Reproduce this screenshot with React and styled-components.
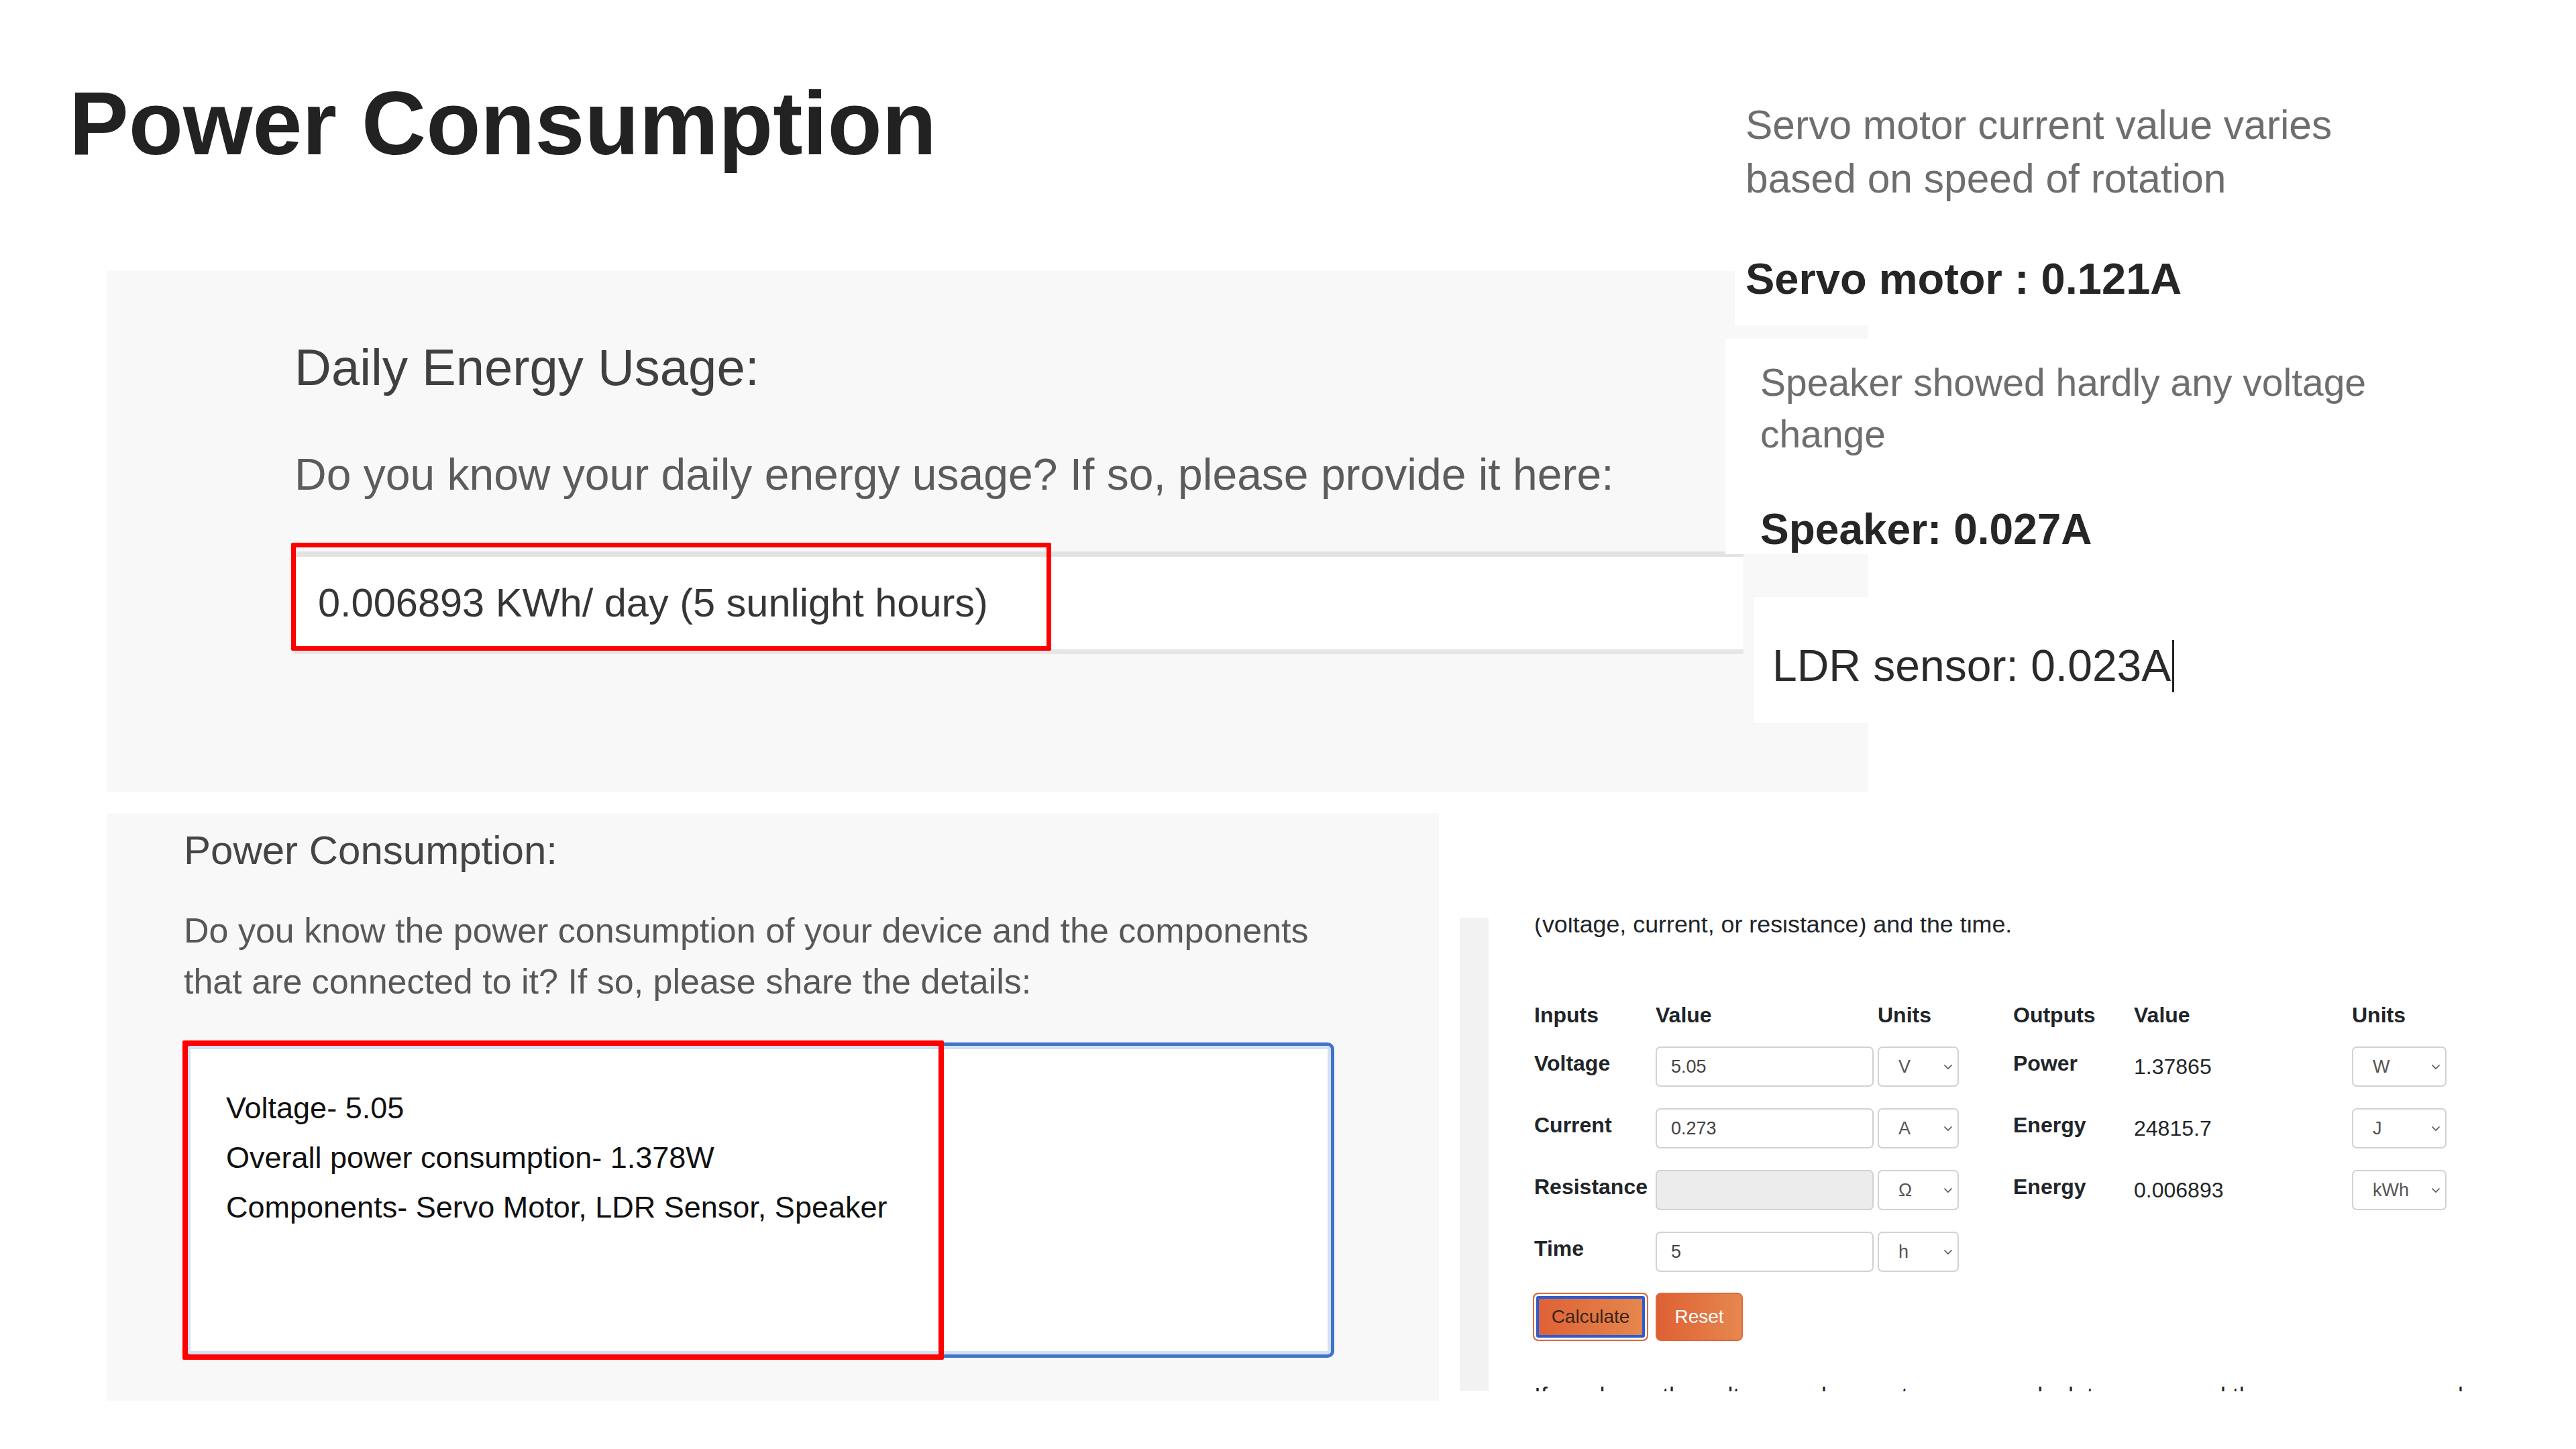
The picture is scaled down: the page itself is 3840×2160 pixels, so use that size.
import React from "react"
import styled, { createGlobalStyle } from "styled-components"

const GlobalStyle = createGlobalStyle`
  html, body {
    margin: 0;
    padding: 0;
    background: #fff;
  }
  body {
    font-family: "Liberation Sans", Arial, sans-serif;
  }
  * {
    box-sizing: border-box;
  }
`

const Page = styled.div`
  width: 3840px;
  height: 2160px;
  overflow: hidden;
  background: #fff;
`

const TopArea = styled.div`
  display: grid;
  grid-template-columns: 2572px 1fr;
  grid-template-rows: 404px 777px;
`

const Title = styled.h1`
  grid-column: 1;
  grid-row: 1;
  margin: 118px 0 0 103px;
  font-size: 133px;
  line-height: 1;
  font-weight: 700;
  color: #222;
`

const DailyPanel = styled.section`
  grid-column: 1 / 3;
  grid-row: 2;
  margin-left: 159px;
  width: 2626px;
  background: #f8f8f8;
  padding: 99px 0 0 280px;
`

const DailyHeading = styled.h2`
  margin: 0;
  font-size: 76px;
  line-height: 90px;
  font-weight: 400;
  color: #404040;
`

const DailyQuestion = styled.p`
  margin: 75px 0 0;
  font-size: 66px;
  line-height: 79px;
  color: #5c5c5c;
  white-space: nowrap;
`

const Field = styled.div`
  position: relative;
  margin-top: 75px;
  width: 2160px;
  height: 153px;
  background: #fff;
  border-top: 8px solid #e3e3e3;
  border-bottom: 7px solid #e6e6e6;
  padding-left: 35px;
  font-size: 59.5px;
  line-height: 138px;
  color: #363636;
  white-space: nowrap;
`

const Highlight = styled.div`
  position: absolute;
  left: ${(p) => p.$left}px;
  top: ${(p) => p.$top}px;
  width: ${(p) => p.$w}px;
  height: ${(p) => p.$h}px;
  border: ${(p) => p.$bw}px solid #ff0000;
  border-radius: 2px;
  pointer-events: none;
`

const Notes = styled.aside`
  grid-column: 2;
  grid-row: 1 / 3;
  position: relative;
  z-index: 2;
  display: flex;
  flex-direction: column;
  padding-top: 100px;
`

const NoteCard = styled.div`
  background: #fff;
  margin-left: ${(p) => p.$indent}px;
  margin-top: ${(p) => p.$gap}px;
  padding: ${(p) => p.$pad};
`

const NoteText = styled.p`
  margin: 0;
  font-size: ${(p) => p.$size}px;
  line-height: ${(p) => p.$lh}px;
  color: #6e6e6e;
  white-space: nowrap;
`

const NoteValue = styled.p`
  margin: ${(p) => p.$mt}px 0 0;
  font-size: ${(p) => p.$size}px;
  line-height: ${(p) => p.$lh}px;
  font-weight: 700;
  color: #262626;
  white-space: nowrap;
`

const LdrText = styled.p`
  margin: 0;
  font-size: 66px;
  line-height: 80px;
  color: #2a2a2a;
  white-space: nowrap;
`

const Caret = styled.span`
  display: inline-block;
  width: 3px;
  height: 78px;
  margin-left: 2px;
  background: #222;
  vertical-align: -17px;
`

const BottomArea = styled.div`
  display: flex;
  align-items: flex-start;
  margin-top: 31px;
`

const PowerPanel = styled.section`
  flex-shrink: 0;
  margin-left: 160px;
  width: 1985px;
  height: 876px;
  background: #f8f8f8;
  padding: 21px 0 0 114px;
`

const PowerHeading = styled.h2`
  margin: 0;
  font-size: 60px;
  line-height: 70px;
  font-weight: 400;
  color: #454545;
`

const PowerQuestion = styled.p`
  margin: 46px 0 0;
  font-size: 52px;
  line-height: 76px;
  color: #585858;
  white-space: nowrap;
`

const Details = styled.div`
  position: relative;
  margin-top: 53px;
  width: 1715px;
  height: 470px;
  background: #fff;
  border: 5px solid #4373c9;
  border-radius: 10px;
  box-shadow: inset 0 0 0 5px #d3e0f5;
  padding: 56px 0 0 58px;
  font-size: 45px;
  line-height: 74px;
  color: #111;
`

const CalcPanel = styled.section`
  flex: 1;
  margin: 156px 0 0 31px;
  height: 706px;
  overflow: hidden;
  background: #fff;
  border-left: 43px solid #f2f2f2;
  padding-left: 68px;
  color: #212529;
`

const CalcText = styled.p`
  margin: ${(p) => p.$mt}px 0 0;
  font-size: 35.8px;
  line-height: 40px;
  white-space: nowrap;
`

const CalcGrid = styled.div`
  display: grid;
  grid-template-columns: 181px 331px 121px 81px 180px 325px 141px;
  grid-template-rows: 30px repeat(4, 60px);
  row-gap: 32px;
  align-items: center;
  margin-top: 100px;
`

const HeadCell = styled.div`
  grid-column: ${(p) => p.$col};
  font-size: 32px;
  line-height: 30px;
  font-weight: 700;
  white-space: nowrap;
`

const RowLabel = styled.div`
  grid-column: ${(p) => p.$col};
  font-size: 32px;
  line-height: 40px;
  font-weight: 700;
  padding-bottom: 10px;
  white-space: nowrap;
`

const ValueBox = styled.div`
  width: 325px;
  height: 60px;
  display: flex;
  align-items: center;
  padding-left: 21px;
  border: 2px solid #d2d2d2;
  border-radius: 7px;
  background: ${(p) => (p.$disabled ? "#ececec" : "#fff")};
  font-size: 27px;
  color: #444;
`

const UnitSelect = styled.div`
  grid-column: ${(p) => p.$col};
  width: ${(p) => p.$w}px;
  height: 60px;
  display: flex;
  align-items: center;
  justify-content: space-between;
  padding: 0 7px 0 29px;
  border: 2px solid #d2d2d2;
  border-radius: 7px;
  background: #fff;
  font-size: 27px;
  color: #555;
`

const OutValue = styled.div`
  grid-column: 6;
  font-size: 32px;
  color: #212529;
`

const ButtonRow = styled.div`
  display: flex;
  gap: 11px;
  margin: 31px 0 0 -2px;
`

const CalcButton = styled.button`
  width: ${(p) => p.$w}px;
  height: 72px;
  border: 2px solid #dc6a3a;
  border-radius: 8px;
  background: linear-gradient(90deg, #de6034, #e6884f);
  font-family: "Liberation Sans", Arial, sans-serif;
  font-size: 28px;
  color: ${(p) => (p.$focused ? "#3a2414" : "#fff")};
  box-shadow: ${(p) =>
    p.$focused ? "inset 0 0 0 3px #fff, inset 0 0 0 7px #2b5cd1" : "none"};
  padding: 0;
`

const Chevron = () => (
  <svg width="14" height="9" viewBox="0 0 14 9" fill="none">
    <path d="M1.5 1.5 L7 7 L12.5 1.5" stroke="#555" strokeWidth="1.6" />
  </svg>
)

const inputs = [
  { label: "Voltage", value: "5.05", unit: "V" },
  { label: "Current", value: "0.273", unit: "A" },
  { label: "Resistance", value: "", unit: "Ω", disabled: true },
  { label: "Time", value: "5", unit: "h" },
]

const outputs = [
  { label: "Power", value: "1.37865", unit: "W" },
  { label: "Energy", value: "24815.7", unit: "J" },
  { label: "Energy", value: "0.006893", unit: "kWh" },
]

function App() {
  return (
    <Page>
      <GlobalStyle />
      <TopArea>
        <Title>Power Consumption</Title>

        <DailyPanel>
          <DailyHeading>Daily Energy Usage:</DailyHeading>
          <DailyQuestion>
            Do you know your daily energy usage? If so, please provide it here:
          </DailyQuestion>
          <Field>
            0.006893 KWh/ day (5 sunlight hours)
            <Highlight $left={-5} $top={-21} $w={1133} $h={161} $bw={7} />
          </Field>
        </DailyPanel>

        <Notes>
          <NoteCard $indent={14} $gap={0} $pad="46px 0 31px 16px">
            <NoteText $size={60.5} $lh={80}>
              Servo motor current value varies
              <br />
              based on speed of rotation
            </NoteText>
            <NoteValue $mt={72} $size={65} $lh={76}>
              Servo motor : 0.121A
            </NoteValue>
          </NoteCard>
          <NoteCard $indent={0} $gap={20} $pad="27px 0 0 52px">
            <NoteText $size={57} $lh={77}>
              Speaker showed hardly any voltage
              <br />
              change
            </NoteText>
            <NoteValue $mt={67} $size={64} $lh={73}>
              Speaker: 0.027A
            </NoteValue>
          </NoteCard>
          <NoteCard $indent={43} $gap={64} $pad="62px 0 46px 27px">
            <LdrText>
              LDR sensor: 0.023A
              <Caret />
            </LdrText>
          </NoteCard>
        </Notes>
      </TopArea>

      <BottomArea>
        <PowerPanel>
          <PowerHeading>Power Consumption:</PowerHeading>
          <PowerQuestion>
            Do you know the power consumption of your device and the components
            <br />
            that are connected to it? If so, please share the details:
          </PowerQuestion>
          <Details>
            <div>Voltage- 5.05</div>
            <div>Overall power consumption- 1.378W</div>
            <div>Components- Servo Motor, LDR Sensor, Speaker</div>
            <Highlight $left={-7} $top={-8} $w={1135} $h={476} $bw={8} />
          </Details>
        </PowerPanel>

        <CalcPanel>
          <CalcText $mt={-10}>(voltage, current, or resistance) and the time.</CalcText>
          <CalcGrid>
            <HeadCell $col={1}>Inputs</HeadCell>
            <HeadCell $col={2}>Value</HeadCell>
            <HeadCell $col={3}>Units</HeadCell>
            <HeadCell $col={5}>Outputs</HeadCell>
            <HeadCell $col={6}>Value</HeadCell>
            <HeadCell $col={7}>Units</HeadCell>

            {inputs.map((row, i) => (
              <React.Fragment key={row.label}>
                <RowLabel $col={1}>{row.label}</RowLabel>
                <ValueBox $disabled={row.disabled}>{row.value}</ValueBox>
                <UnitSelect $col={3} $w={121}>
                  {row.unit}
                  <Chevron />
                </UnitSelect>
                {outputs[i] && (
                  <>
                    <RowLabel $col={5}>{outputs[i].label}</RowLabel>
                    <OutValue>{outputs[i].value}</OutValue>
                    <UnitSelect $col={7} $w={141}>
                      {outputs[i].unit}
                      <Chevron />
                    </UnitSelect>
                  </>
                )}
              </React.Fragment>
            ))}
          </CalcGrid>
          <ButtonRow>
            <CalcButton $w={172} $focused>
              Calculate
            </CalcButton>
            <CalcButton $w={130}>Reset</CalcButton>
          </ButtonRow>
          <CalcText $mt={62}>
            If you know the voltage and current, you can calculate power and the energy consumed.
          </CalcText>
        </CalcPanel>
      </BottomArea>
    </Page>
  )
}

export default App
